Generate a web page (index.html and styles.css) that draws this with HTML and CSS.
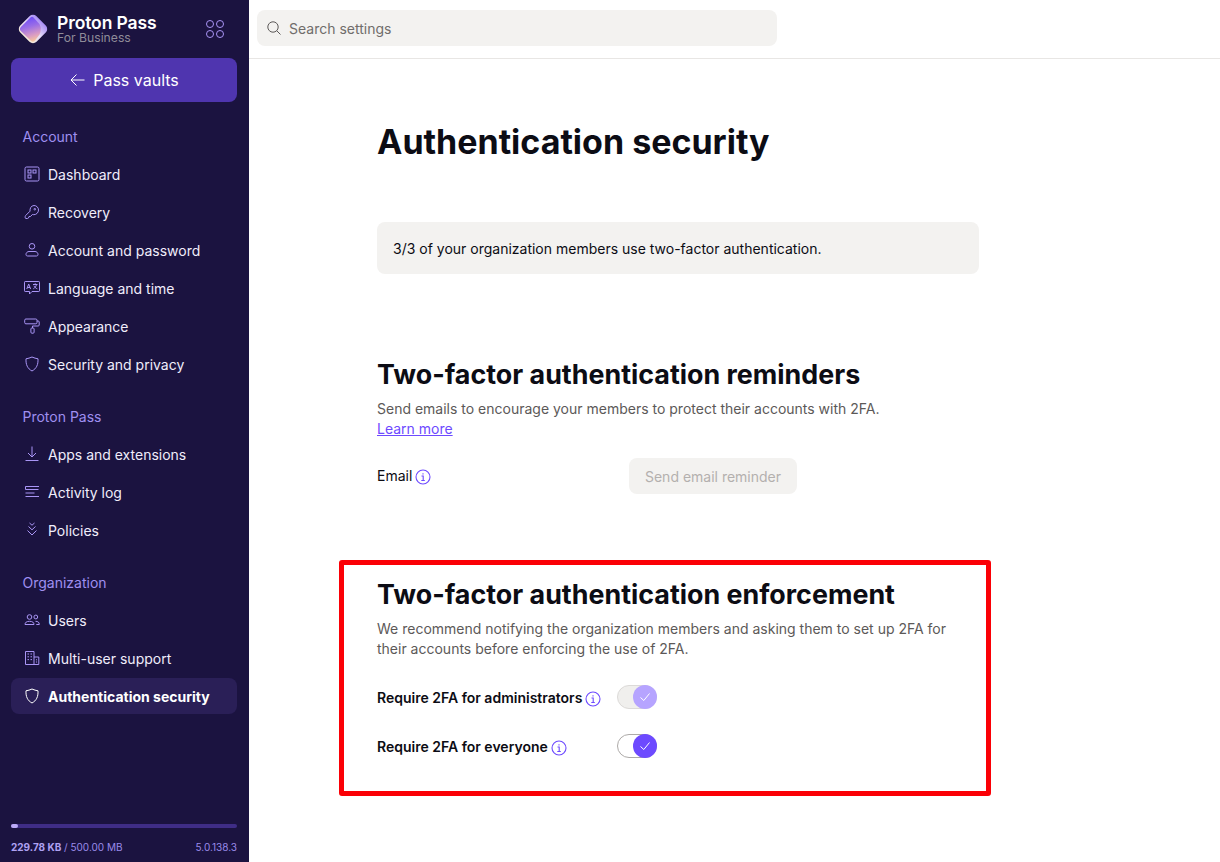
FILE: index.html
```html
<!DOCTYPE html>
<html lang="en">
<head>
  <meta charset="UTF-8">
  <meta name="viewport" content="width=device-width, initial-scale=1.0">
  <title>Authentication security</title>
  <link rel="stylesheet" href="styles.css">
</head>
<body>
  <div class="app">
    <aside class="sidebar">
      <div class="brand">
        <svg class="brand-mark" viewBox="0 0 30 30" width="30" height="30">
          <defs>
            <linearGradient id="markBack" x1="0.5" y1="0" x2="0.5" y2="1">
              <stop offset="0" stop-color="#a88df5"/>
              <stop offset="0.5" stop-color="#e6dcf8"/>
              <stop offset="1" stop-color="#f6ead8"/>
            </linearGradient>
            <linearGradient id="markFront" x1="0.35" y1="0" x2="0.6" y2="1">
              <stop offset="0" stop-color="#6a48fb"/>
              <stop offset="0.4" stop-color="#9a6ee6"/>
              <stop offset="0.75" stop-color="#d99bc4"/>
              <stop offset="1" stop-color="#f7c79b"/>
            </linearGradient>
          </defs>
          <rect x="3.500" y="3.500" width="23" height="23" rx="5" transform="rotate(45 15 15)" fill="url(#markBack)"/>
          <path d="M12.500 3.400 L3 12.700 Q0.700 15 3 17.300 L12.500 26.600 Q15 28.800 17 26.600 L21.500 20.500 Q24 15 21.500 10 L15.500 3.400 Q14 2 12.500 3.400Z" fill="url(#markFront)"/>
        </svg>
        <div class="brand-text">
          <span class="brand-name">Proton Pass</span>
          <span class="brand-sub">For Business</span>
        </div>
        <svg class="apps-icon" viewBox="0 0 18 18" width="18" height="18" fill="none" stroke="#a995f5" stroke-width="1">
          <circle cx="4" cy="4" r="3.500"/><circle cx="14" cy="4" r="3.500"/>
          <circle cx="4" cy="14" r="3.500"/><circle cx="14" cy="14" r="3.500"/>
        </svg>
      </div>

      <button class="vaults-btn">
        <svg viewBox="0 0 16 16" width="16" height="16" fill="none" stroke="#fff" stroke-width="1"><path d="M15.500 8H2M7.500 2.500L2 8l5.500 5.500"/></svg>
        Pass vaults
      </button>

      <nav class="nav">
        <div class="nav-title">Account</div>
        <a class="nav-item">
          <svg viewBox="0 0 16 16"><rect x="1" y="1" width="14" height="14" rx="1.500"/><rect x="4" y="4" width="3" height="3"/><rect x="9" y="4" width="3" height="3"/><rect x="4" y="9" width="3" height="3"/></svg>
          Dashboard
        </a>
        <a class="nav-item">
          <svg viewBox="0 0 16 16"><path d="M10 1.500a4.500 4.500 0 0 1 4.500 4.500c0 2.700-2.200 4.700-4.700 4.700-.5 0-1-.1-1.400-.2L6.500 12.500H5l-.5 1.500-1 .5H2c-.5 0-.8-.4-.8-.8v-1.200c0-.4.200-.7.400-.9L6 7.200c-.3-2.700 1.200-5.700 4-5.700z"/><circle cx="10.800" cy="5.200" r="0.800"/></svg>
          Recovery
        </a>
        <a class="nav-item">
          <svg viewBox="0 0 16 16"><circle cx="8" cy="4.300" r="2.800"/><path d="M2 12.500c0-1.700 1.300-3 3-3h6c1.700 0 3 1.300 3 3 0 1-.7 1.500-1.500 1.500h-9C2.700 14 2 13.500 2 12.500z"/></svg>
          Account and password
        </a>
        <a class="nav-item">
          <svg viewBox="0 0 16 16"><path d="M1.200 1.500h13.600a.7.700 0 0 1 .7.700v8.600a.7.700 0 0 1-.7.700H8l-2.500 2.500v-2.500H1.200a.7.700 0 0 1-.7-.7V2.200a.7.700 0 0 1 .7-.7z"/><path d="M2.800 9l1.900-5 1.900 5M3.500 7.500h2.500M9 4.500h4.500M11.200 3.300v1.200M12.500 4.500c-.4 2-1.500 3.500-3.200 4.300M10 5.800c.6 1.300 1.800 2.500 3.300 3"/></svg>
          Language and time
        </a>
        <a class="nav-item">
          <svg viewBox="0 0 16 16"><rect x="0.700" y="1" width="12.300" height="4.800" rx="1.200"/><path d="M13 3h1.200c.6 0 1 .4 1 1v3c0 .6-.4 1-1 1H8.500v2"/><rect x="6.900" y="10" width="3.200" height="5.200" rx="1"/></svg>
          Appearance
        </a>
        <a class="nav-item">
          <svg viewBox="0 0 16 16"><path d="M8 1c2 .9 4 1.500 6 1.800.3 5.800-1.500 9.800-6 12.200C3.500 12.600 1.700 8.600 2 2.800 4 2.500 6 1.900 8 1z"/></svg>
          Security and privacy
        </a>

        <div class="nav-title">Proton Pass</div>
        <a class="nav-item">
          <svg viewBox="0 0 16 16"><path d="M8 0.500v10M4 7l4 4 4-4M1.500 14.500h13"/></svg>
          Apps and extensions
        </a>
        <a class="nav-item">
          <svg viewBox="0 0 16 16"><path d="M14.500 5.500H1.500V2.500h13.500M1.500 9h9M1.500 12.500h13.500"/></svg>
          Activity log
        </a>
        <a class="nav-item">
          <svg viewBox="0 0 16 16"><path d="M5.500 1L8 3.200 10.500 1M4.500 4.500L8 7.800l3.500-3.300M3.500 8.500L8 13l4.500-4.500"/></svg>
          Policies
        </a>

        <div class="nav-title">Organization</div>
        <a class="nav-item">
          <svg viewBox="0 0 16 16"><circle cx="5.500" cy="5" r="2.300"/><circle cx="11.800" cy="5" r="1.900"/><path d="M1 12.500c0-2 1.500-3.200 4.500-3.200s4.500 1.200 4.500 3.200H1zM11.500 9.300c2.500 0 3.800 1 3.800 3.200h-3"/></svg>
          Users
        </a>
        <a class="nav-item">
          <svg viewBox="0 0 16 16"><path d="M1.500 14.500V1.500h8.500v13zM10 7h4.800v7.500H10M3.500 4h1.500M6.500 4H8M3.500 6.800h1.500M6.500 6.800H8M3.500 9.600h1.500M6.500 9.600H8M12 9.800h1M12 12h1"/></svg>
          Multi-user support
        </a>
        <a class="nav-item active">
          <svg viewBox="0 0 16 16"><path d="M8 1c2 .9 4 1.500 6 1.800.3 5.800-1.500 9.800-6 12.200C3.500 12.600 1.700 8.600 2 2.800 4 2.500 6 1.900 8 1z"/></svg>
          Authentication security
        </a>
      </nav>

      <div class="storage">
        <div class="storage-bar"><div class="storage-used" style="width: 3%"></div></div>
        <div class="storage-info">
          <span><b>229.78 KB</b> / 500.00 MB</span>
          <span>5.0.138.3</span>
        </div>
      </div>
    </aside>

    <div class="main">
      <header class="topbar">
        <div class="search">
          <svg viewBox="0 0 16 16" width="16" height="16" fill="none" stroke="#5c5958" stroke-width="1"><circle cx="7" cy="7" r="5.200"/><path d="M10.800 10.800L14.500 14.500"/></svg>
          <span>Search settings</span>
        </div>
      </header>

      <div class="content">
        <h1>Authentication security</h1>
        <div class="notice">3/3 of your organization members use two-factor authentication.</div>

        <section class="reminders">
          <h2>Two-factor authentication reminders</h2>
          <p>Send emails to encourage your members to protect their accounts with 2FA.<br><a class="link">Learn more</a></p>
          <div class="email-row">
            <div class="field-label plain"><span class="email-text">Email</span> <svg class="info" viewBox="0 0 16 16"><circle cx="8" cy="8" r="7"/><path d="M6.500 7h1.700v4.300M6.300 11.500h3.500M8 4.300v1.200"/></svg></div>
            <button class="reminder-btn">Send email reminder</button>
          </div>
        </section>

        <section class="enforcement">
          <div class="red-box"></div>
          <h2>Two-factor authentication enforcement</h2>
          <p>We recommend notifying the organization members and asking them to set up 2FA for their accounts before enforcing the use of 2FA.</p>
          <div class="toggle-row">
            <div class="field-label">Require 2FA for administrators <svg class="info" viewBox="0 0 16 16"><circle cx="8" cy="8" r="7"/><path d="M6.500 7h1.700v4.300M6.300 11.500h3.500M8 4.300v1.200"/></svg></div>
            <div class="toggle disabled"><span class="knob"><svg viewBox="0 0 16 16"><path d="M3.500 8.500L6.800 11.500L12.500 4.500"/></svg></span></div>
          </div>
          <div class="toggle-row">
            <div class="field-label">Require 2FA for everyone <svg class="info" viewBox="0 0 16 16"><circle cx="8" cy="8" r="7"/><path d="M6.500 7h1.700v4.300M6.300 11.500h3.500M8 4.300v1.200"/></svg></div>
            <div class="toggle"><span class="knob"><svg viewBox="0 0 16 16"><path d="M3.500 8.500L6.800 11.500L12.500 4.500"/></svg></span></div>
          </div>
        </section>
      </div>
    </div>
  </div>
</body>
</html>
```

FILE: styles.css
```css
* {
  box-sizing: border-box;
}

html, body {
  margin: 0;
  height: 100%;
}

body {
  font-family: Inter, "Liberation Sans", sans-serif;
  font-size: 14px;
  color: #0c0c14;
  background: #fff;
  overflow: hidden;
}

.app {
  display: flex;
  height: 862px;
}

/* sidebar */
.sidebar {
  width: 249px;
  flex: none;
  background: #1b1340;
  color: #f0edfb;
  padding: 0 12px 0 11px;
  display: flex;
  flex-direction: column;
}

.brand {
  display: flex;
  align-items: center;
  height: 58px;
  padding-left: 7px;
}

.brand-mark {
  flex: none;
}

.brand-text {
  display: flex;
  flex-direction: column;
  margin-left: 9px;
  padding-top: 1px;
}

.brand-name {
  font-size: 17.5px;
  font-weight: 600;
  letter-spacing: -0.1px;
  color: #fff;
  line-height: 16px;
}

.brand-sub {
  font-size: 12.2px;
  color: #8f8c99;
  line-height: 13px;
}

.apps-icon {
  margin-left: auto;
  margin-right: 13px;
}

.vaults-btn {
  display: flex;
  align-items: center;
  justify-content: center;
  gap: 8px;
  width: 226px;
  height: 44px;
  flex: none;
  background: #4f35af;
  color: #fff;
  border: none;
  border-radius: 8px;
  font: inherit;
  font-size: 16px;
}

.nav {
  margin-top: 16px;
  flex: 1;
}

.nav-title {
  color: #9f8ff0;
  height: 37px;
  line-height: 38px;
  padding-left: 11.5px;
  margin-top: 15px;
}

.nav-title:first-child {
  margin-top: 0;
}

.nav-item {
  display: flex;
  align-items: center;
  gap: 8px;
  height: 38px;
  padding-left: 13px;
}

.nav-item svg {
  width: 16px;
  height: 16px;
  flex: none;
  fill: none;
  stroke: #a995f5;
  stroke-width: 1;
}

.nav-item.active {
  height: 36px;
  margin-top: 1px;
  background: #2a1f57;
  border-radius: 8px;
  font-weight: 700;
  color: #fff;
}

.nav-item.active svg {
  stroke: #fff;
}

.storage {
  padding-bottom: 7px;
}

.storage-bar {
  height: 4px;
  background: #3f2d86;
  border-radius: 2px;
}

.storage-used {
  height: 4px;
  background: #bcaaf7;
  border-radius: 2px;
}

.storage-info {
  display: flex;
  justify-content: space-between;
  margin-top: 12px;
  font-size: 10px;
  line-height: 15px;
  color: #9a8bea;
}

.storage-info b {
  font-weight: 700;
  color: #aea1f2;
}

/* top bar */
.main {
  flex: 1;
  min-width: 0;
}

.topbar {
  height: 59px;
  border-bottom: 1px solid #e8e6e4;
  padding: 10px 8px;
}

.search {
  display: flex;
  align-items: center;
  gap: 7px;
  width: 520px;
  height: 36px;
  padding-left: 9px;
  background: #f3f2f0;
  border-radius: 8px;
  color: #706d6b;
}

/* content */
.content {
  width: 602px;
  margin-left: 128px;
  padding-top: 59px;
}

h1 {
  margin: 0;
  font-size: 34px;
  line-height: 48px;
  font-weight: 700;
}

.notice {
  margin-top: 56px;
  height: 52px;
  line-height: 54px;
  padding-left: 16px;
  background: #f3f2f0;
  border-radius: 8px;
}

h2 {
  margin: 0;
  font-size: 26.85px;
  line-height: 38px;
  font-weight: 700;
}

section p {
  margin: 6px 0 0;
  color: #5c5958;
  line-height: 20px;
}

.link {
  color: #6d4aff;
  text-decoration: underline;
}

.reminders {
  margin-top: 81px;
}

.email-row {
  display: flex;
  align-items: center;
  height: 36px;
  margin-top: 19px;
}

.email-text {
  margin-bottom: 2px;
}

.field-label {
  display: flex;
  align-items: center;
  gap: 3px;
  width: 240px;
  padding-top: 2px;
  font-weight: 600;
}

.field-label.plain {
  width: 252px;
  padding-top: 0;
  font-weight: 400;
}

.info {
  width: 16px;
  height: 16px;
  fill: none;
  stroke: #6d4aff;
  stroke-width: 1.1;
  margin-top: 2px;
}

.reminder-btn {
  width: 168px;
  height: 36px;
  background: #f3f2f0;
  color: #b3b0ae;
  border: none;
  border-radius: 8px;
  font: inherit;
}

.enforcement {
  position: relative;
  margin-top: 81px;
}

.red-box {
  position: absolute;
  left: -38px;
  top: -15px;
  width: 652px;
  height: 236px;
  border: 5px solid #fb0006;
  border-radius: 3px;
}

.toggle-row {
  display: flex;
  align-items: center;
  height: 49px;
}

.enforcement p + .toggle-row {
  margin-top: 13px;
}

.toggle {
  position: relative;
  width: 40px;
  height: 24px;
  border: 1px solid #adaaa8;
  border-radius: 12px;
  background: #fff;
}

.knob {
  position: absolute;
  right: -1px;
  top: -1px;
  width: 24px;
  height: 24px;
  border-radius: 50%;
  background: #6d4aff;
  display: flex;
  align-items: center;
  justify-content: center;
}

.knob svg {
  width: 16px;
  height: 16px;
  fill: none;
  stroke: #fff;
  stroke-width: 1;
}

.toggle.disabled {
  background: #f0efed;
  border-color: #dcdad8;
}

.toggle.disabled .knob {
  background: #b6a4ff;
}
```
